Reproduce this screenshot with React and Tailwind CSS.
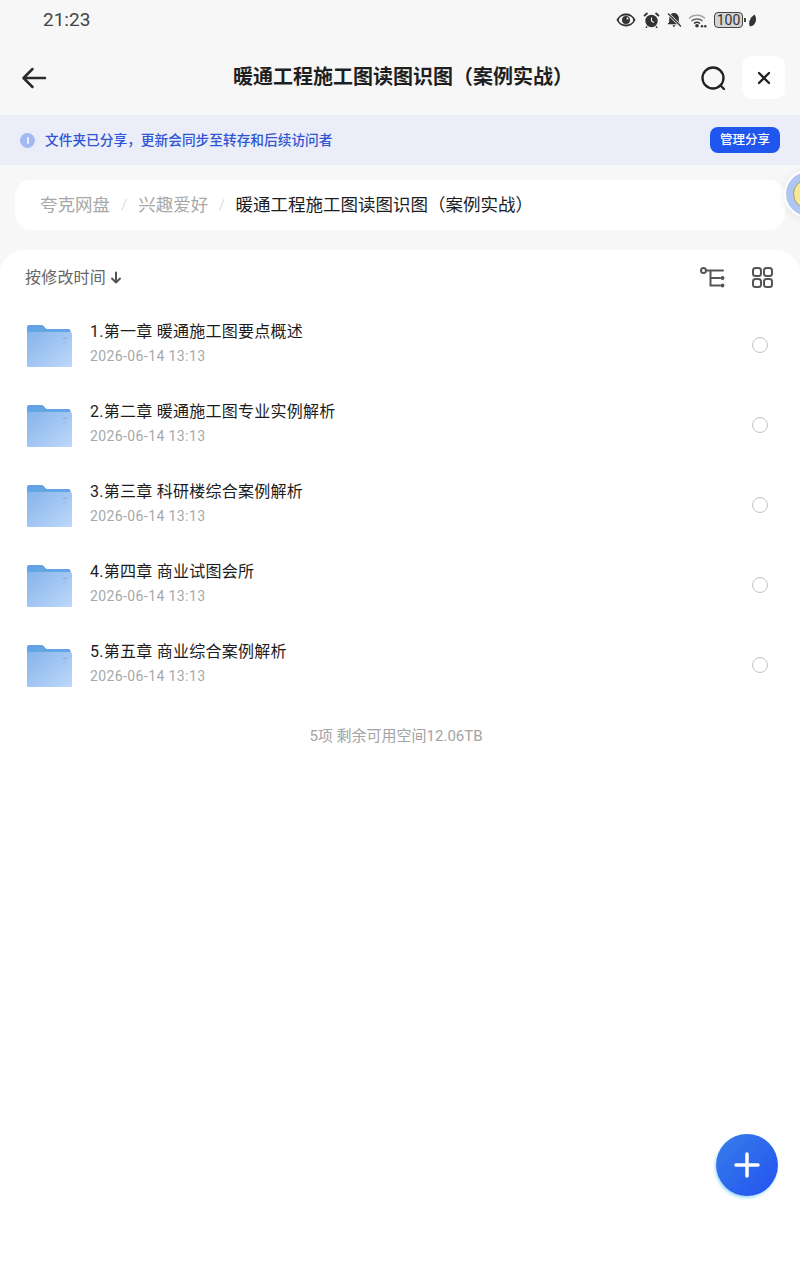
const SANS = "font-['Roboto','Noto_Sans_CJK_SC',sans-serif]";

const rows = [
  "1.第一章 暖通施工图要点概述",
  "2.第二章 暖通施工图专业实例解析",
  "3.第三章 科研楼综合案例解析",
  "4.第四章 商业试图会所",
  "5.第五章 商业综合案例解析",
];

function Folder() {
  return (
    <svg width="46" height="44" viewBox="0 0 46 44" className="shrink-0 mt-[3px]">
      <defs>
        <linearGradient id="fb" x1="0" y1="0" x2="1" y2="1">
          <stop offset="0" stopColor="#86b4ea" />
          <stop offset="1" stopColor="#bdd8fa" />
        </linearGradient>
      </defs>
      <path d="M1 3a2 2 0 0 1 2-2h12.500a3 3 0 0 1 2.200 1l2.600 3h22.200a2 2 0 0 1 2 2v8H1z" fill="#64a3e4" />
      <rect x="1" y="8" width="45" height="35" rx="1.500" fill="url(#fb)" />
      <rect x="37" y="14" width="4" height="1" fill="#7fa6d4" />
      <rect x="37" y="18" width="4" height="1" fill="#9dbde2" />
    </svg>
  );
}

function StatusIcons() {
  return (
    <div className="flex items-center">
      <svg width="20" height="14" viewBox="0 0 20 14">
        <path d="M0.500 7C3 2.500 6.200 0.600 10 0.600S17 2.500 19.500 7C17 11.500 13.800 13.400 10 13.400S3 11.500 0.500 7z" fill="#333" />
        <ellipse cx="10" cy="7" rx="7.200" ry="4.500" fill="#f7f7f7" />
        <circle cx="10" cy="7" r="4" fill="#333" />
        <circle cx="11.500" cy="5.500" r="1" fill="#f7f7f7" />
      </svg>
      <svg width="17" height="16" viewBox="0 0 17 16" className="ml-[7px]">
        <circle cx="8.500" cy="9" r="6.200" fill="#333" />
        <path d="M8.500 5.500V9l2.500 1.500" stroke="#f7f7f7" strokeWidth="1.100" fill="none" />
        <path d="M1 4L4.500 1M16 4L12.500 1" stroke="#333" strokeWidth="1.700" />
        <path d="M4 14.500L3 16M13 14.500L14 16" stroke="#333" strokeWidth="1.400" />
      </svg>
      <svg width="16" height="16" viewBox="0 0 16 16" className="ml-[6px]">
        <path d="M8 1a4.800 4.800 0 0 1 4.800 4.800V10l1.700 2.200h-13L3.200 10V5.800A4.800 4.800 0 0 1 8 1z" fill="#333" />
        <path d="M6.300 13.300h3.400L8 15.200z" fill="#333" />
        <path d="M2 1.500L15 14.500" stroke="#f7f7f7" strokeWidth="2.600" />
        <path d="M2 1.500L15 14.500" stroke="#333" strokeWidth="1.300" />
      </svg>
      <svg width="19" height="15" viewBox="0 0 19 15" className="ml-[6px]">
        <path d="M1 5.500C5 1.300 13 1.300 17 5.500" stroke="#a5a5a5" strokeWidth="1.500" fill="none" />
        <path d="M3.500 8C6.500 5.200 11.500 5.200 14.500 8" stroke="#666" strokeWidth="1.500" fill="none" />
        <path d="M6 10.500C7.800 9 10.200 9 12 10.500" stroke="#333" strokeWidth="1.500" fill="none" />
        <circle cx="9" cy="12.800" r="1.800" fill="#333" />
        <circle cx="14" cy="13.200" r="1.200" fill="#333" />
        <circle cx="17.300" cy="13.200" r="1.200" fill="#333" />
      </svg>
      <div className="flex items-center ml-[7px]">
        <div className="w-[29px] h-[16px] rounded-[4px] border-[1.500px] border-[#444] bg-[#d4d4d4] flex items-center justify-center text-[14px] leading-none text-[#333]">100</div>
        <div className="w-[2px] h-[4px] bg-[#444] ml-[1px]" />
      </div>
      <svg width="9" height="13" viewBox="0 0 9 13" className="ml-[2px]">
        <path d="M6.500 0.500C8.500 3.500 9 8 5 11.500L2 12.500C0 9 1.500 4 6.500 0.500z" fill="#333" />
      </svg>
    </div>
  );
}

function Row({ title }) {
  return (
    <div className="h-20 flex items-center pl-[26px] pr-[32px]">
      <Folder />
      <div className="ml-[18px] flex-1 -mt-[1px]">
        <div className="text-[16px] leading-5 text-[#1c1c1e] tracking-[0.25px]">{title}</div>
        <div className="text-[14px] leading-[18px] mt-[5px] text-[#a8a8a8] tracking-[0.4px]">2026-06-14 13:13</div>
      </div>
      <div className="w-4 h-4 rounded-full border-[1.500px] border-[#c4c4c4] bg-white mt-[1px]" />
    </div>
  );
}

export default function App() {
  return (
    <div className={`${SANS} w-[800px] h-[1280px] relative overflow-hidden bg-[#f7f7f7]`}>
      <div className="h-10 flex items-center justify-between pl-[43px] pr-[43px] text-[19px] text-[#444]">
        <span className="pt-[1px]">21:23</span>
        <StatusIcons />
      </div>

      <div className="h-[75px] relative flex items-center justify-between pl-[21px] pr-[15px]">
        <svg width="26" height="24" viewBox="0 0 26 24" fill="none" stroke="#2b2b2b" strokeWidth="2.500" strokeLinecap="round" strokeLinejoin="round">
          <path d="M24 12H3M11.500 3L2.500 12l9 9" />
        </svg>
        <div className="absolute inset-x-0 top-0 h-full flex items-center justify-center text-[20px] font-bold text-[#1f1f1f] pb-[1px] translate-x-[3px]">暖通工程施工图读图识图（案例实战）</div>
        <div className="flex items-center gap-[15px] relative">
          <svg width="28" height="28" viewBox="0 0 28 28" fill="none" stroke="#222" strokeWidth="2.300" strokeLinecap="round">
            <circle cx="14" cy="14" r="10.500" />
            <path d="M21.500 21.500L25 25" />
          </svg>
          <div className="w-[43px] h-[43px] rounded-[10px] bg-white flex items-center justify-center">
            <svg width="14" height="14" viewBox="0 0 14 14" stroke="#222" strokeWidth="2.300" strokeLinecap="round">
              <path d="M2 2l10 10M12 2L2 12" />
            </svg>
          </div>
        </div>
      </div>

      <div className="h-[50px] bg-[#ebeef8] flex items-center pl-5 pr-5">
        <div className="w-[15px] h-[15px] rounded-full bg-[#a3b9f3] flex items-center justify-center">
          <div className="w-[2px] h-[7px] bg-[#eef1fb] rounded-full" />
        </div>
        <span className="ml-[10px] text-[13.700px] font-medium text-[#2f55d4] flex-1">文件夹已分享，更新会同步至转存和后续访问者</span>
        <div className="w-[70px] h-[26px] rounded-[8px] bg-[#1f56ee] flex items-center justify-center text-[12.500px] font-medium text-white">管理分享</div>
      </div>

      <div className="mt-[15px] ml-[15px] w-[770px] h-[50px] bg-white rounded-[16px] flex items-center pl-[25px] pt-[1px] text-[17.500px]">
        <span className="text-[#a8a8a8]">夸克网盘</span>
        <span className="mx-[11px] text-[#dddddd] text-[15px]">/</span>
        <span className="text-[#a8a8a8]">兴趣爱好</span>
        <span className="mx-[10.500px] text-[#dddddd] text-[15px]">/</span>
        <span className="text-[#1c1c1e]">暖通工程施工图读图识图（案例实战）</span>
      </div>

      <div className="absolute left-[784px] top-[170px] w-[48px] h-[48px] rounded-full bg-[#b0c6f2] border-[2px] border-white flex items-center pl-[7px] shadow-[0_2px_8px_rgba(0,0,0,0.08)]">
        <div className="w-[30px] h-[30px] rounded-full bg-[#f6e89a] border border-[#a8a060] flex items-center justify-center">
          <svg width="14" height="14" viewBox="0 0 14 14" fill="none" stroke="#8c8650" strokeWidth="1">
            <path d="M2 10L7 3" />
          </svg>
        </div>
      </div>

      <div className="mt-5 h-[1030px] bg-white rounded-t-[24px]">
        <div className="h-[54px] flex items-center justify-between pl-[25px] pr-[27px] pt-[1px]">
          <div className="flex items-center text-[16px] text-[#666] tracking-[0.2px]">
            <span>按修改时间</span>
            <svg width="12" height="13" viewBox="0 0 12 13" fill="none" stroke="#555" strokeWidth="2" strokeLinecap="round" strokeLinejoin="round" className="ml-[4px]">
              <path d="M6 1.500V11.500M2 7.500l4 4 4-4" />
            </svg>
          </div>
          <div className="flex items-center gap-[27px]">
            <svg width="25" height="22" viewBox="0 0 25 22" fill="none" stroke="#555" strokeWidth="2" strokeLinecap="round">
              <circle cx="3.500" cy="3.500" r="2.500" />
              <path d="M7 3.500H23M10.500 3.500V18.500H20M10.500 11H20" />
              <circle cx="22.500" cy="11" r="1" fill="#555" />
              <circle cx="22.500" cy="18.500" r="1" fill="#555" />
            </svg>
            <svg width="21" height="21" viewBox="0 0 21 21" fill="none" stroke="#555" strokeWidth="2">
              <rect x="1" y="1" width="8" height="8" rx="2.500" />
              <rect x="12" y="1" width="8" height="8" rx="2.500" />
              <rect x="1" y="12" width="8" height="8" rx="2.500" />
              <rect x="12" y="12" width="8" height="8" rx="2.500" />
            </svg>
          </div>
        </div>
        {rows.map((t) => (
          <Row key={t} title={t} />
        ))}
        <div className="mt-[22px] text-center text-[15px] leading-5 text-[#a3a3a3] pr-[8px]">5项 剩余可用空间12.06TB</div>
      </div>

      <div className="absolute left-[716px] top-[1134px] w-[62px] h-[62px] rounded-full bg-gradient-to-br from-[#3a7de8] to-[#2450f0] shadow-[-1px_2px_3px_rgba(90,200,250,0.6)] flex items-center justify-center">
        <svg width="26" height="26" viewBox="0 0 26 26" stroke="#fff" strokeWidth="3.500" strokeLinecap="round">
          <path d="M13 2V24M2 13H24" />
        </svg>
      </div>
    </div>
  );
}
